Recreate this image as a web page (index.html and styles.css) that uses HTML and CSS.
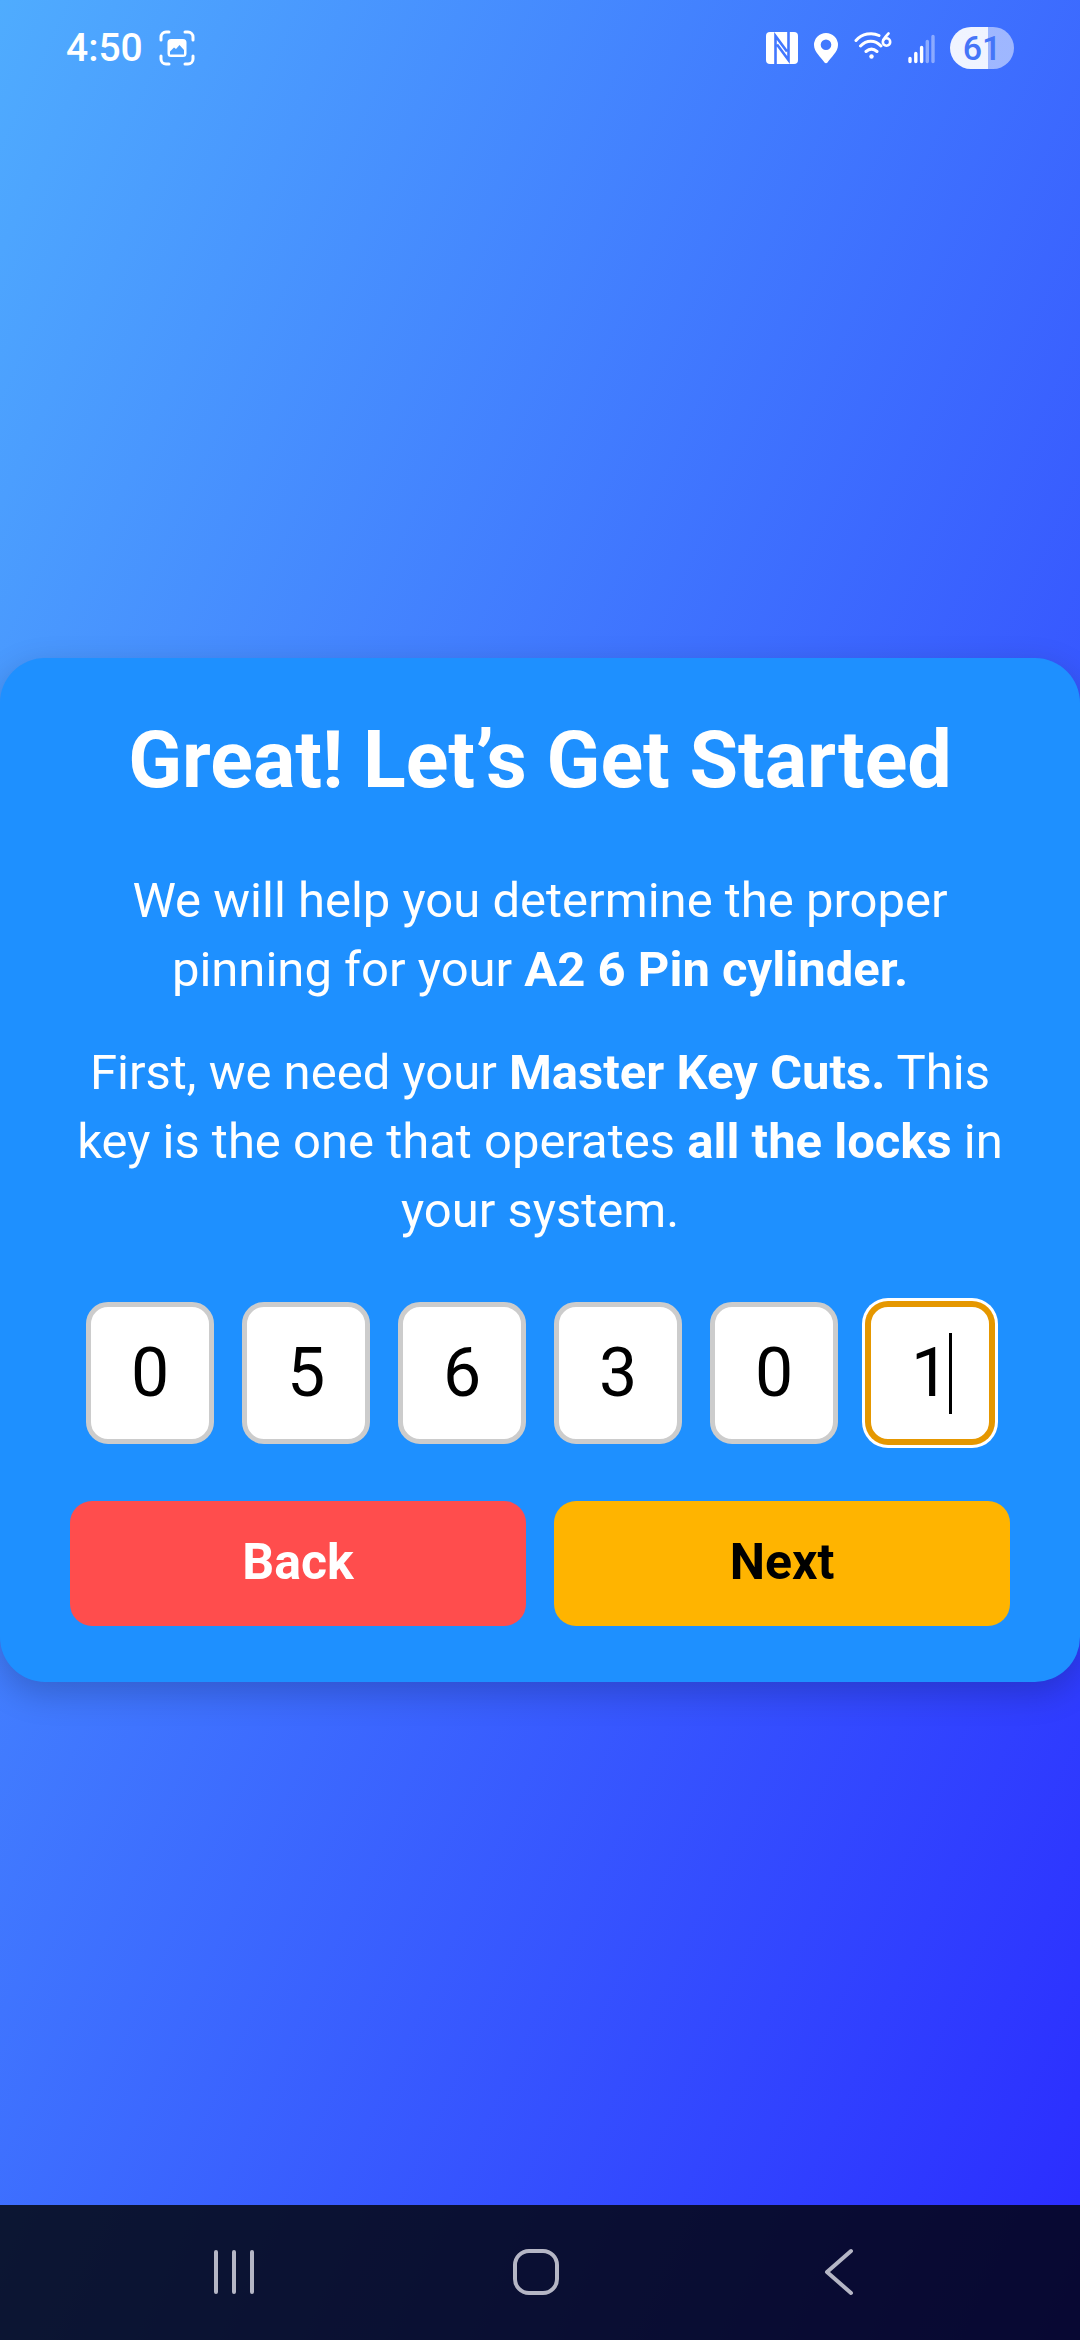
FILE: index.html
```html
<!DOCTYPE html>
<html lang="en">
<head>
<meta charset="utf-8">
<meta name="viewport" content="width=device-width, initial-scale=1">
<title>Master Key Cuts</title>
<link rel="stylesheet" href="styles.css">
</head>
<body>
<header class="status">
  <div class="status-group status-left">
    <time class="clock">4:50</time>
    <svg class="icon" width="36" height="36" viewBox="0 0 36 36" fill="none" aria-hidden="true">
      <path d="M2 10V7a5 5 0 0 1 5-5h3M26 2h3a5 5 0 0 1 5 5v3M34 26v3a5 5 0 0 1-5 5h-3M10 34H7a5 5 0 0 1-5-5v-3" stroke="#fff" stroke-width="3" stroke-linecap="round"/>
      <path fill="#fff" fill-rule="evenodd" d="M12 9h12a3.500 3.500 0 0 1 3.500 3.500v11a3.500 3.500 0 0 1-3.500 3.500H12a3.500 3.500 0 0 1-3.500-3.500v-11A3.500 3.500 0 0 1 12 9zM11 24.500h14V20l-4.500-5-3.500 4-2-1.500-4 4z"/>
    </svg>
  </div>
  <div class="status-group status-right">
    <svg class="icon" width="32" height="32" viewBox="0 0 32 32" aria-hidden="true">
      <rect width="32" height="32" rx="4" fill="#fff"/>
      <path class="cut" d="M9.500 33V4L21 19.500M22.500 -1V28L11 12.500"/>
    </svg>
    <svg class="icon" width="24" height="32" viewBox="0 0 24 32" aria-hidden="true">
      <path fill="#fff" fill-rule="evenodd" d="M12 1a12 12 0 0 1 12 12c0 7-7 12-10.500 17.500a1.800 1.800 0 0 1-3 0C7 25 0 20 0 13A12 12 0 0 1 12 1zm0 6.500a5.300 5.300 0 1 0 0 10.600 5.300 5.300 0 0 0 0-10.600z"/>
    </svg>
    <svg class="icon" width="38" height="32" viewBox="0 0 38 32" fill="none" stroke="#fff" stroke-width="3" stroke-linecap="round" aria-hidden="true">
      <path d="M2 8.500C8 1.500 18 0 25 3.500M6.500 14c6-6.500 14.500-6.500 20.500 0M12 19.500c3.500-3 7.500-3 11 0"/>
      <circle cx="17.500" cy="24.500" r="2.200" fill="#fff" stroke="none"/>
      <circle cx="32.500" cy="10" r="3.700" stroke-width="2.600"/>
      <path d="M34.500 1.500Q31 5 29.300 8" stroke-width="2.600"/>
    </svg>
    <svg class="icon" width="26" height="32" viewBox="0 0 26 32" overflow="visible" stroke="#fff" stroke-width="3.400" stroke-linecap="round" aria-hidden="true">
      <path d="M2 26.500v3M7.800 21.500v8M13.600 15.500v14"/>
      <path d="M19.300 9.500v20M25 4.500v25" opacity=".4"/>
    </svg>
    <span class="battery">61</span>
  </div>
</header>

<main class="stage">
  <form class="card">
    <h1 class="title">Great! Let’s Get Started</h1>
    <p class="text">We will help you determine the proper pinning for your <strong>A2 6 Pin cylinder.</strong></p>
    <p class="text">First, we need your <strong>Master Key Cuts.</strong> This key is the one that operates <strong>all the locks</strong> in your system.</p>
    <div class="cuts" role="group" aria-label="Master Key Cuts">
      <label class="cut-cell"><input class="cut-input" aria-label="Cut 1" inputmode="numeric" maxlength="1" value="0"></label>
      <label class="cut-cell"><input class="cut-input" aria-label="Cut 2" inputmode="numeric" maxlength="1" value="5"></label>
      <label class="cut-cell"><input class="cut-input" aria-label="Cut 3" inputmode="numeric" maxlength="1" value="6"></label>
      <label class="cut-cell"><input class="cut-input" aria-label="Cut 4" inputmode="numeric" maxlength="1" value="3"></label>
      <label class="cut-cell"><input class="cut-input" aria-label="Cut 5" inputmode="numeric" maxlength="1" value="0"></label>
      <label class="cut-cell"><input class="cut-input is-active" aria-label="Cut 6" inputmode="numeric" maxlength="1" value="1"><span class="caret"></span></label>
    </div>
    <div class="actions">
      <button class="btn btn-back" type="button">Back</button>
      <button class="btn btn-next" type="submit">Next</button>
    </div>
  </form>
</main>

<nav class="navbar" aria-label="System navigation">
  <button class="nav-btn" type="button" aria-label="Recent apps">
    <svg width="48" height="48" viewBox="0 0 48 48"><path d="M6 4v40M24 4v40M42 4v40"/></svg>
  </button>
  <button class="nav-btn" type="button" aria-label="Home">
    <svg width="48" height="48" viewBox="0 0 48 48"><rect x="3" y="3" width="42" height="42" rx="14"/></svg>
  </button>
  <button class="nav-btn" type="button" aria-label="Back">
    <svg width="48" height="48" viewBox="0 0 48 48"><path d="M36 3L12 24L36 45"/></svg>
  </button>
</nav>
</body>
</html>
```

FILE: styles.css
```css
* {
  box-sizing: border-box;
}

body {
  margin: 0;
  min-height: 100vh;
  display: grid;
  grid-template-rows: 135px 1fr 135px;
  font-family: Roboto, "Liberation Sans", sans-serif;
  color: #fff;
  background: linear-gradient(to bottom right, #4facfe, #2a2aff);
}

/* Status bar */
.status {
  display: flex;
  justify-content: space-between;
  align-items: center;
  padding: 0 66px 39px;
}

.status-group {
  display: flex;
  align-items: center;
  gap: 16px;
}

.icon {
  display: block;
}

.clock {
  font-size: 39px;
  line-height: 42px;
  font-weight: 500;
}

.cut {
  fill: none;
  stroke: #4277ff;
  stroke-width: 2.600;
}

.battery {
  width: 64px;
  height: 42px;
  border-radius: 21px;
  background: linear-gradient(90deg, rgba(255, 255, 255, .92) 60%, rgba(255, 255, 255, .5) 60%);
  color: #4575f8;
  font-size: 34px;
  line-height: 42px;
  font-weight: 500;
  text-align: center;
}

/* Card */
.stage {
  display: flex;
  align-items: center;
}

.card {
  width: 100%;
  padding: 56px 70px;
  border-radius: 45px;
  background: #1e90ff;
  box-shadow: 0 11px 34px rgba(0, 0, 0, .2);
  text-align: center;
}

.title {
  margin: 0 0 60px;
  font-size: 79px;
  line-height: 92px;
  font-weight: 700;
}

.text {
  margin: 0 0 34px;
  font-size: 49px;
  line-height: 69px;
}

.cuts {
  display: flex;
  justify-content: center;
  gap: 28px;
  margin: 57px 0;
}

.cut-cell {
  position: relative;
  width: 128px;
}

.cut-input {
  display: block;
  width: 100%;
  height: 142px;
  padding: 0;
  border: 5px solid #ccc;
  border-radius: 22px;
  background: #fff;
  color: #000;
  font: 400 68px/80px Roboto, "Liberation Sans", sans-serif;
  text-align: center;
  outline: none;
}

.is-active {
  border-color: #e59700;
  box-shadow: 0 0 0 1px #e59700, 0 0 0 4px #fff;
  caret-color: transparent;
}

.caret {
  position: absolute;
  left: calc(50% + 19px);
  top: 31px;
  width: 3px;
  height: 81px;
  background: #000;
}

.actions {
  display: flex;
  gap: 28px;
}

.btn {
  flex: 1;
  height: 125px;
  padding: 0 0 4px;
  border: 0;
  border-radius: 22px;
  font: 700 50px/60px Roboto, "Liberation Sans", sans-serif;
}

.btn-back {
  background: #ff4d4d;
  color: #fff;
}

.btn-next {
  background: #ffb400;
  color: #000;
}

/* System navigation */
.navbar {
  display: flex;
  align-items: center;
  padding: 0 90px 2px 83px;
  background: rgba(0, 0, 0, .8);
}

.nav-btn {
  flex: 1;
  display: flex;
  justify-content: center;
  padding: 0;
  border: 0;
  background: none;
}

.nav-btn svg {
  fill: none;
  stroke: #b5b6c5;
  stroke-width: 4;
  stroke-linecap: round;
  stroke-linejoin: round;
}
```
